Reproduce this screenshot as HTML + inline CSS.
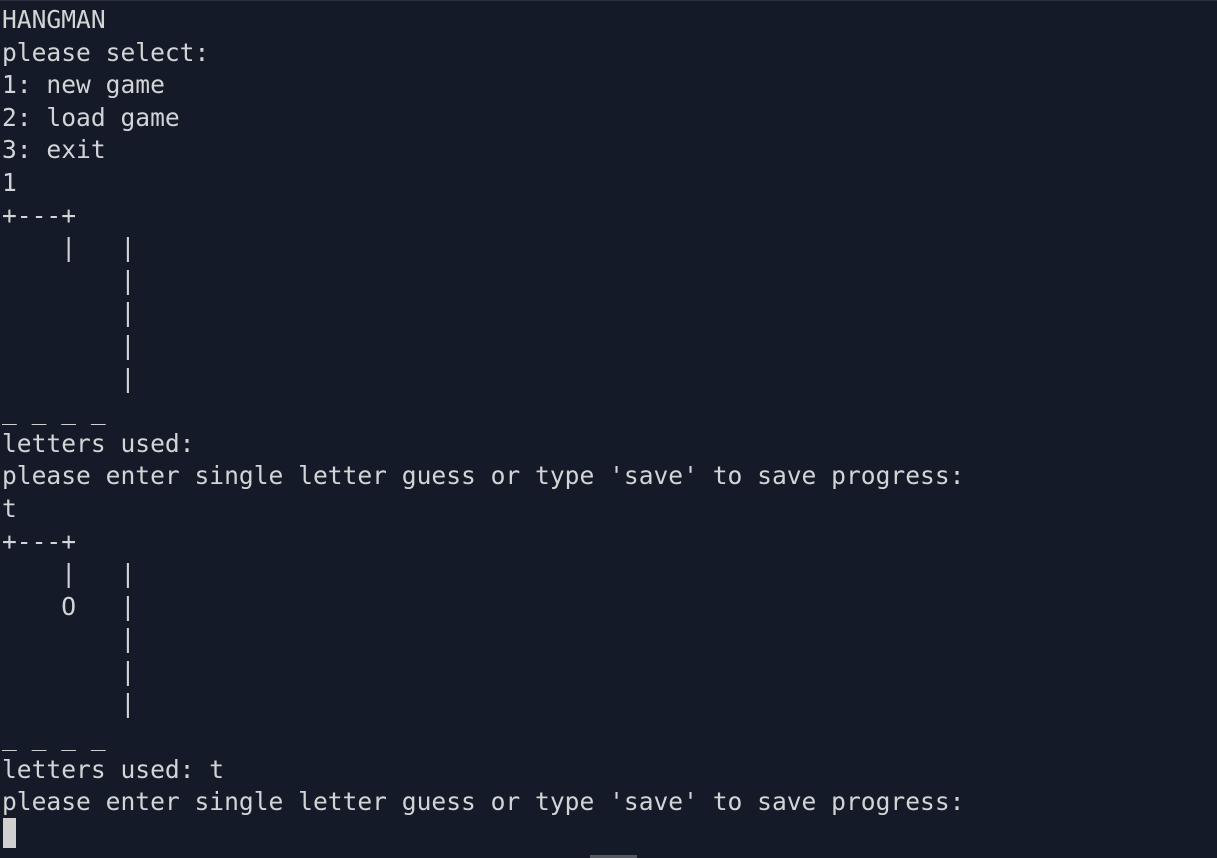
<!DOCTYPE html>
<html><head><meta charset="utf-8"><style>
html,body{margin:0;padding:0;background:#141a27;width:1217px;height:858px;overflow:hidden}
pre{margin:0;position:absolute;left:2px;top:4px;font-family:"DejaVu Sans Mono","Liberation Mono",monospace;font-size:24.6px;line-height:32.6px;color:#d2d4d6;letter-spacing:0}
.cur{position:absolute;left:3px;top:818px;width:13px;height:30px;background:#d0d0d0}
.bar{position:absolute;left:590px;top:855px;width:47px;height:3px;background:#55595f}
.top{position:absolute;left:0;top:0;width:1217px;height:1px;background:#2a303c}
</style></head><body>
<div class="top"></div>
<pre>HANGMAN
please select:
1: new game
2: load game
3: exit
1
+---+
    |   |
        |
        |
        |
        |
_ _ _ _
letters used:
please enter single letter guess or type 'save' to save progress:
t
+---+
    |   |
    O   |
        |
        |
        |
_ _ _ _
letters used: t
please enter single letter guess or type 'save' to save progress:</pre>
<div class="cur"></div>
<div class="bar"></div>
</body></html>
